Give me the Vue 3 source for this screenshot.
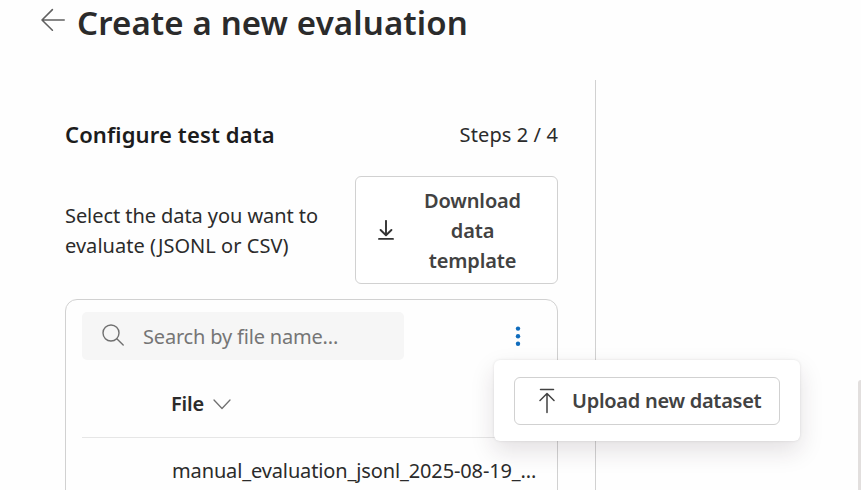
<script setup>
import { ref } from 'vue'

const search = ref('')
const files = ['manual_evaluation_jsonl_2025-08-19_...']
</script>

<template>
  <div class="page">
    <header class="header">
      <svg class="back" viewBox="0 0 26 24" fill="none" stroke="#606060" stroke-width="1.6" stroke-linecap="round" stroke-linejoin="round">
        <path d="M24.200 12H2M12.400 1.600L2 12l10.400 10.200" />
      </svg>
      <h1>Create a new evaluation</h1>
    </header>
    <div class="body">
      <section class="panel">
        <div class="title-row">
          <h2>Configure test data</h2>
          <span class="steps">Steps 2 / 4</span>
        </div>
        <div class="intro">
          <p><span class="l1">Select the data you want to</span><br /><span class="l2">evaluate (JSONL or CSV)</span></p>
          <button class="btn download">
            <svg width="16" height="20" viewBox="0 0 16 20" fill="none" stroke="#333" stroke-width="1.9" stroke-linecap="round" stroke-linejoin="round">
              <path d="M8 .9v14M2.600 10L8 15.300l5.400-5.300M1 18.900h14" />
            </svg>
            <span class="label">Download<br />data<br />template</span>
          </button>
        </div>
        <div class="card">
          <div class="toolbar">
            <label class="search">
              <svg width="23" height="23" viewBox="0 0 23 23" fill="none" stroke="#707070" stroke-width="1.4" stroke-linecap="round">
                <circle cx="9" cy="9" r="8" />
                <path d="M14.800 14.800l6.400 6.200" />
              </svg>
              <span v-if="!search" class="placeholder">Search by file name...</span>
            </label>
            <div class="more">
              <svg width="6" height="22" viewBox="0 0 6 22" fill="#0f6cbd">
                <circle cx="3" cy="3.600" r="2.200" />
                <circle cx="3" cy="11.200" r="2.200" />
                <circle cx="3" cy="18.700" r="2.200" />
              </svg>
              <div class="menu">
                <button class="btn upload">
                  <svg width="16" height="26" viewBox="0 0 16 26" fill="none" stroke="#424242" stroke-width="1.5" stroke-linecap="round" stroke-linejoin="round">
                    <path d="M1.500 1.500h13M8 24.500V6M1 12.500l7-7 7 7" />
                  </svg>
                  <span class="upload-label">Upload new dataset</span>
                </button>
              </div>
            </div>
          </div>
          <div class="thead">
            <span>File</span>
            <svg width="18" height="11" viewBox="0 0 18 11" fill="none" stroke="#707070" stroke-width="1.3" stroke-linecap="round" stroke-linejoin="round">
              <path d="M1 1l8 8.500L17 1" />
            </svg>
          </div>
          <div v-for="f in files" :key="f" class="row"><span>{{ f }}</span></div>
        </div>
      </section>
      <aside class="preview"></aside>
    </div>
  </div>
</template>

<style>
body { background: #fefefe; overflow: hidden; }
</style>

<style scoped>
.page {
  width: 861px;
  height: 490px;
  box-sizing: border-box;
  overflow: hidden;
  font-family: "Noto Sans", "Open Sans", sans-serif;
  font-size: 20px;
  line-height: 30px;
  color: #2b2b2b;
  white-space: nowrap;
}
.page * { box-sizing: border-box; }
h1, h2, p { margin: 0; }
.header {
  height: 80px;
  padding-left: 40px;
  display: flex;
  align-items: flex-start;
  gap: 11px;
}
.back { width: 26px; height: 24px; margin-top: 8px; }
h1 { font-size: 33px; line-height: 46px; font-weight: 600; color: #2b2b2b; letter-spacing: 0.13px; }
.body { display: flex; justify-content: space-between; }
.panel {
  width: 596px;
  height: 410px;
  padding: 39px 37px 0 65px;
  border-right: 1px solid #d1d1d1;
}
.title-row { display: flex; justify-content: space-between; height: 57px; }
h2 { font-size: 22px; line-height: 30px; font-weight: 600; letter-spacing: 0.13px; color: #1c1c1c; }
.steps { padding-top: 1px; letter-spacing: 0.1px; }
.intro { display: flex; justify-content: space-between; align-items: center; }
.intro p { padding-top: 1px; }
.l1 { letter-spacing: -0.07px; }
.l2 { letter-spacing: 0.04px; }
.btn {
  font: inherit;
  font-weight: 600;
  color: #424242;
  background: #fff;
  border: 1px solid #d1d1d1;
  border-radius: 6px;
  display: flex;
  align-items: center;
}
.download { width: 203px; height: 108px; padding: 0 36px 0 22px; justify-content: space-between; }
.download .label { padding-top: 1px; text-align: center; letter-spacing: -0.15px; }
.card {
  margin-top: 15px;
  height: 240px;
  border: 1px solid #d1d1d1;
  border-radius: 12px;
  padding: 12px 0 0 16px;
}
.toolbar { display: flex; justify-content: space-between; align-items: center; padding-right: 36px; }
.search {
  width: 322px;
  height: 48px;
  border-radius: 5px;
  background: #f6f6f6;
  display: flex;
  align-items: center;
  gap: 18px;
  padding-left: 20px;
}
.search svg { margin-top: -2px; }
.placeholder { color: #757575; letter-spacing: -0.18px; padding-top: 2px; }
.more { position: relative; width: 6px; height: 22px; display: flex; }
.menu {
  position: absolute;
  z-index: 2;
  top: 35px;
  left: -21px;
  width: 306px;
  height: 81px;
  padding: 17px 19px 16px 20px;
  background: #fff;
  border-radius: 6px;
  box-shadow: 0 0 3px rgba(0, 0, 0, 0.1), 0 10px 24px rgba(50, 20, 40, 0.13);
}
.upload { width: 266px; height: 48px; padding: 0 0 0 24px; gap: 17px; letter-spacing: -0.28px; }
.thead {
  height: 78px;
  border-bottom: 1px solid #e6e6e6;
  padding: 11px 0 0 89px;
  display: flex;
  align-items: center;
  gap: 9px;
  font-weight: 600;
  letter-spacing: -0.2px;
}
.row { height: 65px; padding-left: 90px; display: flex; align-items: center; letter-spacing: -0.13px; }
.preview { width: 3px; height: 110px; margin-top: 300px; background: #e2dfde; border-radius: 8px 0 0 0; }
</style>
